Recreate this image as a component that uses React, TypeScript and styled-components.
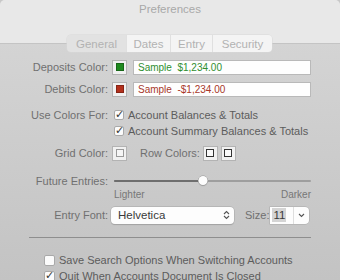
import React from 'react';
import styled, { createGlobalStyle } from 'styled-components';

const GlobalStyle = createGlobalStyle`
  html, body {
    margin: 0;
    padding: 0;
    width: 340px;
    height: 280px;
    overflow: hidden;
    background: #c8c8c8;
  }
  * { box-sizing: border-box; }
`;

const Window = styled.div`
  width: 340px;
  height: 280px;
  display: flex;
  flex-direction: column;
  font-family: 'Liberation Sans', Arial, sans-serif;
  font-size: 11px;
  color: #707070;
  background: linear-gradient(180deg, #d7d7d7 0%, #c3c3c3 100%);
  border-radius: 5px 5px 0 0;
  overflow: hidden;
`;

const TitleBar = styled.div`
  height: 44px;
  flex-shrink: 0;
  background: #e8e8e8;
  border-bottom: 1px solid #c4c4c4;
  display: flex;
  justify-content: center;
  padding-top: 3px;
  color: #a9a9a9;
  font-size: 11.5px;
`;

const TabBar = styled.div`
  align-self: center;
  flex-shrink: 0;
  display: flex;
  height: 17px;
  margin-top: -9px;
  margin-left: -1px;
  border-radius: 4px;
  overflow: hidden;
  box-shadow: 0 0 0 0.5px #d8d8d8;
`;

const Tab = styled.div<{ $selected?: boolean; $w: number }>`
  width: ${p => p.$w}px;
  display: flex;
  align-items: center;
  justify-content: center;
  background: ${p => (p.$selected ? '#e2e2e2' : '#f4f4f4')};
  color: #b2b2b2;
  font-size: 11.5px;
  & + & {
    border-left: 1px solid #e0e0e0;
  }
`;

const Content = styled.div`
  flex-shrink: 0;
  display: flex;
  flex-direction: column;
  padding: 4px 29px 0 0;
`;

const Row = styled.div<{ $h: number; $mt?: number }>`
  flex-shrink: 0;
  display: flex;
  align-items: center;
  height: ${p => p.$h}px;
  margin-top: ${p => p.$mt ?? 0}px;
  gap: 4px;
`;

const Label = styled.div<{ $top?: boolean }>`
  width: 108px;
  flex-shrink: 0;
  text-align: right;
  white-space: nowrap;
  align-self: ${p => (p.$top ? 'flex-start' : 'auto')};
  line-height: ${p => (p.$top ? '16px' : 'normal')};
`;

const Well = styled.div`
  width: 15px;
  height: 15px;
  flex-shrink: 0;
  border: 1px solid #b3b3b3;
  background: #f1f1f1;
  display: flex;
  align-items: center;
  justify-content: center;
`;

const Swatch = styled.div<{ $color: string; $edge?: string }>`
  width: 8px;
  height: 8px;
  background: ${p => p.$color};
  border: 1px solid ${p => p.$edge ?? 'rgba(0,0,0,0.25)'};
`;

const SampleField = styled.div<{ $color: string }>`
  flex: 1;
  height: 15px;
  margin-left: 2px;
  background: #fefefe;
  border: 1px solid #b9b9b9;
  color: ${p => p.$color};
  font-size: 10px;
  display: flex;
  align-items: center;
  padding-left: 4px;
  white-space: pre;
`;

const CheckList = styled.div`
  display: flex;
  flex-direction: column;
  align-self: flex-start;
`;

const CheckLine = styled.div`
  flex-shrink: 0;
  display: flex;
  align-items: center;
  height: 16px;
  gap: 4px;
  color: #5c5c5c;
  white-space: nowrap;
`;

const Box = styled.div<{ $size?: number }>`
  width: ${p => p.$size ?? 10}px;
  height: ${p => p.$size ?? 10}px;
  flex-shrink: 0;
  background: #fbfbfb;
  border: 1px solid #a9a9a9;
  border-radius: 2px;
  position: relative;
  margin-left: 2px;
`;

const Tick = styled.span`
  position: absolute;
  left: 0px;
  top: -3px;
  font-size: 11px;
  font-weight: bold;
  color: #333;
  font-family: 'DejaVu Sans', sans-serif;
`;

const Pair = styled.div`
  display: flex;
  align-items: center;
  gap: 3px;
  margin-left: 9px;
`;

const SliderArea = styled.div`
  flex: 1;
  margin-left: 2px;
  height: 10px;
  display: flex;
  align-items: center;
  position: relative;
`;

const Track = styled.div`
  flex: 1;
  height: 2px;
  border-radius: 1px;
  background: #9e9e9e;
`;

const TrackFill = styled.div`
  height: 2px;
  background: #6e6e6e;
  border-radius: 1px;
`;

const Knob = styled.div`
  position: absolute;
  top: 0px;
  width: 9px;
  height: 9px;
  border-radius: 50%;
  background: #fdfdfd;
  box-shadow: 0 0 0 0.5px #9a9a9a, 0 1px 1px rgba(0, 0, 0, 0.2);
  transform: translateX(-50%);
`;

const Ends = styled.div`
  flex: 1;
  margin-left: 2px;
  display: flex;
  justify-content: space-between;
  font-size: 10px;
  color: #777;
`;

const Popup = styled.div`
  width: 123px;
  height: 17px;
  background: #fdfdfd;
  border-radius: 4px;
  box-shadow: 0 0 0 0.5px #a8a8a8, 0 0.5px 1px rgba(0, 0, 0, 0.2);
  display: flex;
  align-items: center;
  justify-content: space-between;
  padding: 0 4px 0 7px;
  color: #3a3a3a;
  font-size: 11.5px;
  margin-left: -1px;
`;

const SizeLabel = styled.div`
  margin-left: 7px;
`;

const Combo = styled.div`
  width: 39px;
  height: 17px;
  margin-left: -3px;
  display: flex;
  background: #fdfdfd;
  border-radius: 0 4px 4px 0;
  box-shadow: 0 0 0 0.5px #a8a8a8;
`;

const ComboText = styled.div`
  width: 24px;
  display: flex;
  align-items: center;
  border-right: 1px solid #dedede;
  padding-left: 2px;
  color: #3a3a3a;
  font-size: 11.5px;
`;

const Selected = styled.span`
  background: #d4d4d4;
  padding: 1px 1px;
`;

const ComboButton = styled.div`
  flex: 1;
  display: flex;
  align-items: center;
  justify-content: center;
`;

const Separator = styled.div`
  flex-shrink: 0;
  height: 1px;
  background: #8e8e8e;
  margin: 11px 0 0 29px;
`;

const BottomChecks = styled.div`
  flex-shrink: 0;
  display: flex;
  flex-direction: column;
  margin: 14px 0 0 42px;
`;

const Updown = () => (
  <svg width="7" height="10" viewBox="0 0 7 10">
    <path d="M1 4 L3.5 1.5 L6 4 M1 6 L3.5 8.5 L6 6" fill="none" stroke="#555" strokeWidth="1.1" />
  </svg>
);

const Chevron = () => (
  <svg width="7" height="5" viewBox="0 0 7 5">
    <path d="M1 1 L3.5 3.5 L6 1" fill="none" stroke="#555" strokeWidth="1.1" />
  </svg>
);

const Check = ({ on, size }: { on?: boolean; size?: number }) => (
  <Box $size={size}>{on && <Tick>✓</Tick>}</Box>
);

export default function App() {
  const value = 45;
  return (
    <>
      <GlobalStyle />
      <Window>
        <TitleBar>Preferences</TitleBar>
        <TabBar>
          <Tab $selected $w={59}>General</Tab>
          <Tab $w={44}>Dates</Tab>
          <Tab $w={42}>Entry</Tab>
          <Tab $w={60}>Security</Tab>
        </TabBar>
        <Content>
          <Row $h={22}>
            <Label>Deposits Color:</Label>
            <Well><Swatch $color="#1f8a1f" /></Well>
            <SampleField $color="#2f8f2f">{'Sample  $1,234.00'}</SampleField>
          </Row>
          <Row $h={22}>
            <Label>Debits Color:</Label>
            <Well><Swatch $color="#b3301c" /></Well>
            <SampleField $color="#a8382a">{'Sample  -$1,234.00'}</SampleField>
          </Row>
          <Row $h={32} $mt={7}>
            <Label $top>Use Colors For:</Label>
            <CheckList>
              <CheckLine><Check on />Account Balances &amp; Totals</CheckLine>
              <CheckLine><Check on />Account Summary Balances &amp; Totals</CheckLine>
            </CheckList>
          </Row>
          <Row $h={22} $mt={3}>
            <Label>Grid Color:</Label>
            <Well><Swatch $color="#f6f6f6" $edge="#9a9a9a" /></Well>
            <Pair>
              <span>Row Colors:</span>
              <Well><Swatch $color="#fafafa" $edge="#333" /></Well>
              <Well><Swatch $color="#fafafa" $edge="#333" /></Well>
            </Pair>
          </Row>
          <Row $h={14} $mt={10}>
            <Label>Future Entries:</Label>
            <SliderArea>
              <Track><TrackFill style={{ width: `${value}%` }} /></Track>
              <Knob style={{ left: `${value}%` }} />
            </SliderArea>
          </Row>
          <Row $h={12}>
            <Label />
            <Ends><span>Lighter</span><span>Darker</span></Ends>
          </Row>
          <Row $h={22} $mt={4}>
            <Label>Entry Font:</Label>
            <Popup>Helvetica<Updown /></Popup>
            <SizeLabel>Size:</SizeLabel>
            <Combo>
              <ComboText><Selected>11</Selected></ComboText>
              <ComboButton><Chevron /></ComboButton>
            </Combo>
          </Row>
          <Separator />
          <BottomChecks>
            <CheckLine><Check size={11} />Save Search Options When Switching Accounts</CheckLine>
            <CheckLine><Check on size={11} />Quit When Accounts Document Is Closed</CheckLine>
          </BottomChecks>
        </Content>
      </Window>
    </>
  );
}
